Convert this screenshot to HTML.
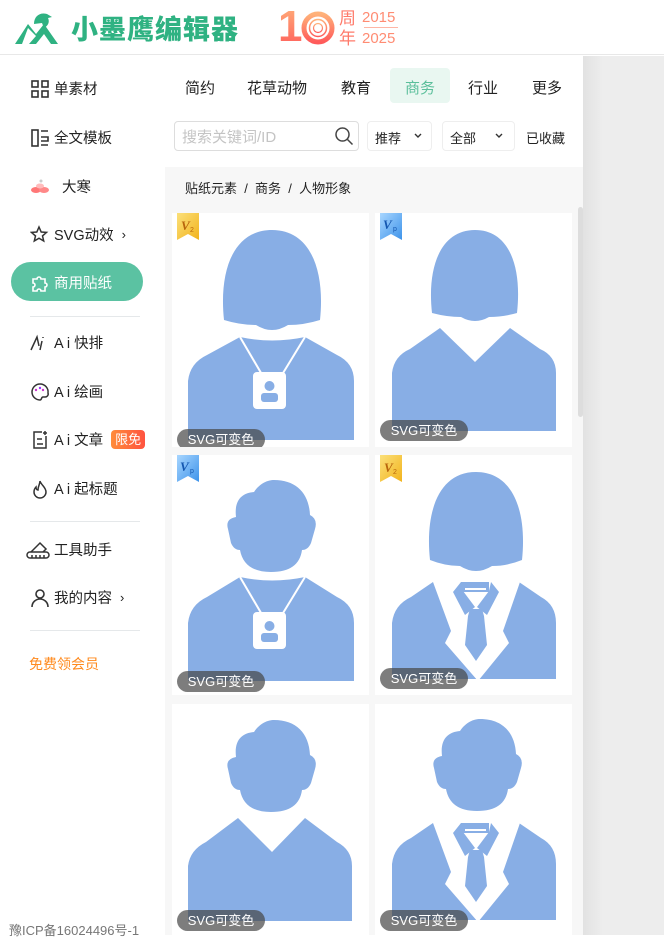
<!DOCTYPE html>
<html><head><meta charset="utf-8"><style>
*{margin:0;padding:0;box-sizing:border-box}
body{width:664px;height:935px;overflow:hidden;background:#fff;font-family:"Liberation Sans","Noto Sans CJK SC",sans-serif;position:relative;color:#222}
.a{position:absolute}
.hdr{left:0;top:0;width:664px;height:55px;background:#fff;border-bottom:1px solid #e8e8e8}
.side .it{position:absolute;left:30px;font-size:14.5px;color:#222;white-space:nowrap;display:flex;align-items:center;gap:4px}
.side .it svg{width:20px;height:20px}
.div{position:absolute;left:30px;width:110px;height:1px;background:#e5e8ea}
.tab{position:absolute;top:77px;font-size:15px;color:#222}
.card{position:absolute;background:#fff;overflow:hidden}
.card svg.f{position:absolute;left:0;top:0}
.lbl{position:absolute;left:5px;height:21px;width:88px;border-radius:11px;background:rgba(70,70,70,.7);color:#fff;font-size:13px;line-height:21px;text-align:center}
.rib{position:absolute;left:5px;top:0}
</style></head><body>
<div class="a hdr"></div>
<svg class="a" style="left:14px;top:10px" width="50" height="36" viewBox="0 0 50 36">
<path d="M20,14 C20,6 26,2 33,4 L38,7 L34,8 C36,12 34,16 30,18 L28,13 Z" fill="#2fb282"/>
<path d="M1,34 L14,14 L22,24 L30,14 L44,34 L37,34 L30,24 L22,34 L15,34 L22,26 L14,18 L8,34 Z" fill="#2fb282"/>
</svg>
<div class="a" style="left:71px;top:10px;font-size:27px;font-weight:900;color:#2fb282;letter-spacing:1px;font-family:'Noto Sans CJK SC',sans-serif;line-height:36px">小墨鹰编辑器</div>
<div class="a" style="left:278px;top:3px;font-size:44px;font-weight:bold;line-height:48px;background:linear-gradient(180deg,#ffb27a,#ff5a5a);-webkit-background-clip:text;color:transparent;font-family:'Liberation Sans',sans-serif">1</div>
<svg class="a" style="left:301px;top:9px" width="34" height="38" viewBox="0 0 34 38"><defs><linearGradient id="hg" x1="0" y1="0" x2="0" y2="1"><stop offset="0" stop-color="#ffb27a"/><stop offset="1" stop-color="#ff5a5a"/></linearGradient></defs><g fill="none" stroke="url(#hg)"><circle cx="17" cy="19" r="14" stroke-width="5"/><circle cx="17" cy="19" r="8.5" stroke-width="1.5"/><circle cx="17" cy="19" r="4.5" stroke-width="1.2"/></g></svg>
<div class="a" style="left:339px;top:7px;font-size:17px;line-height:20px;color:#ff7b6b;font-family:'Noto Sans CJK SC',sans-serif">周<br>年</div>
<div class="a" style="left:362px;top:7px;font-size:15px;line-height:21px;color:#ff8c73">2015<br>2025</div>
<div class="a" style="left:364px;top:27px;width:34px;height:1px;background:#ffb6a5"></div>

<div class="side">
<div class="it" style="top:78px"><svg viewBox="0 0 20 20" fill="none" stroke="#333" stroke-width="1.6"><rect x="2" y="2" width="6" height="6"/><rect x="12" y="2" width="6" height="6"/><rect x="2" y="12" width="6" height="6"/><rect x="12" y="12" width="6" height="6"/></svg>单素材</div>
<div class="it" style="top:127px"><svg viewBox="0 0 20 20" fill="none" stroke="#333" stroke-width="1.6"><rect x="2" y="2" width="6" height="16"/><path d="M11 3h7M11 9h7v4h-7M11 17h7"/></svg>全文模板</div>
<div class="it" style="top:176px"><svg viewBox="0 0 20 20"><ellipse cx="6" cy="13" rx="5" ry="3" fill="#f77"/><ellipse cx="14" cy="13" rx="5" ry="3" fill="#f88"/><ellipse cx="10" cy="9" rx="4" ry="2.5" fill="#fbb"/><circle cx="11" cy="4" r="1.5" fill="#ccc"/></svg>&nbsp;&nbsp;大寒</div>
<div class="it" style="top:224px"><svg viewBox="0 0 20 20" fill="none" stroke="#333" stroke-width="1.5"><path d="M9 2l2.2 5 5.3.4-4 3.5 1.2 5.1L9 13.2 4.3 16l1.2-5.1-4-3.5 5.3-.4z"/></svg>SVG动效 <span style="font-size:13px;margin-left:4px">›</span></div>
<div class="a" style="left:11px;top:262px;width:132px;height:39px;border-radius:20px;background:#5bc2a2"></div>
<div class="it" style="top:272px;color:#fff"><svg viewBox="0 0 20 20" fill="none" stroke="#fff" stroke-width="1.6"><path d="M3 6h4a2 2 0 1 1 4 0h4v4a2 2 0 1 1 0 4v4h-4a2 2 0 1 0-4 0H3v-4a2 2 0 1 0 0-4z"/></svg>商用贴纸</div>
<div class="div" style="top:316px"></div>
<div class="it" style="top:332px"><svg viewBox="0 0 20 20" fill="none" stroke="#333" stroke-width="1.5"><path d="M1 17L7 4l2 9M12 8l-2 9M13 4v1"/></svg>A i 快排</div>
<div class="it" style="top:381px"><svg viewBox="0 0 20 20" fill="none" stroke="#333" stroke-width="1.5"><path d="M10 2a8 8 0 1 0 0 16c2 0 1-3 3-3h2a3 3 0 0 0 3-4 8 8 0 0 0-8-9z"/><circle cx="6" cy="8" r="1.2" fill="#c3c" stroke="none"/><circle cx="10" cy="6" r="1.2" fill="#93f" stroke="none"/><circle cx="13" cy="8" r="1.2" fill="#c3c" stroke="none"/></svg>A i 绘画</div>
<div class="it" style="top:429px"><svg viewBox="0 0 20 20" fill="none" stroke="#333" stroke-width="1.5"><path d="M12 2H4v16h12V6M7 9h5M7 14h6M15 1v4M13 3h4"/></svg>A i 文章<span style="margin-left:4px;background:linear-gradient(90deg,#ff8c3a,#ff5340);color:#fff;font-size:13px;padding:0 4px;border-radius:4px;line-height:19px">限免</span></div>
<div class="it" style="top:478px"><svg viewBox="0 0 20 20" fill="none" stroke="#333" stroke-width="1.5"><path d="M10 2c1 4 6 6 6 11a6 6 0 0 1-12 0c0-3 2-5 2-5 0 2 1 3 2 3 0-4 2-6 2-9z"/></svg>A i 起标题</div>
<div class="div" style="top:521px"></div>
<div class="it" style="top:539px;left:26px"><svg viewBox="0 0 24 20" style="width:24px" fill="none" stroke="#333" stroke-width="1.5"><rect x="1" y="12" width="22" height="6" rx="3"/><path d="M5 12l9-9 6 6-3 3M6 15v3M10 15v3M14 15v3M18 15v3"/></svg>工具助手</div>
<div class="it" style="top:587px"><svg viewBox="0 0 20 20" fill="none" stroke="#333" stroke-width="1.6"><circle cx="10" cy="6" r="4"/><path d="M2 19c0-5 4-8 8-8s8 3 8 8"/></svg>我的内容 <span style="font-size:13px;margin-left:4px">›</span></div>
<div class="div" style="top:630px"></div>
<div class="a" style="left:29px;top:654px;font-size:14px;color:#ff8a1e">免费领会员</div>
<div class="a" style="left:9px;top:920px;font-size:13px;color:#777">豫ICP备16024496号-1</div>
</div>

<div class="a" style="left:583px;top:56px;width:81px;height:879px;background:linear-gradient(90deg,#e2e2e2,#ededed 20px)"></div>

<div class="a" style="left:390px;top:68px;width:60px;height:35px;border-radius:4px;background:#e9f7f1"></div>
<div class="tab" style="left:185px">简约</div>
<div class="tab" style="left:247px">花草动物</div>
<div class="tab" style="left:341px">教育</div>
<div class="tab" style="left:405px;color:#5bbf9b">商务</div>
<div class="tab" style="left:468px">行业</div>
<div class="tab" style="left:532px">更多</div>

<div class="a" style="left:174px;top:121px;width:185px;height:30px;border:1px solid #ddd;border-radius:4px"></div>
<div class="a" style="left:182px;top:126px;font-size:15px;color:#c4c4c4">搜索关键词/ID</div>
<svg class="a" style="left:334px;top:126px" width="20" height="20" viewBox="0 0 20 20" fill="none" stroke="#444" stroke-width="1.5"><circle cx="8.5" cy="8.5" r="6.5"/><path d="M13.5 13.5l5 5"/></svg>
<div class="a" style="left:367px;top:121px;width:65px;height:30px;border:1px solid #eee;border-radius:4px"></div>
<div class="a" style="left:375px;top:128px;font-size:13px">推荐</div>
<svg class="a" style="left:414px;top:133px" width="8" height="6" viewBox="0 0 8 6" fill="none" stroke="#333" stroke-width="1.4"><path d="M1 1l3 3 3-3"/></svg>
<div class="a" style="left:442px;top:121px;width:73px;height:30px;border:1px solid #eee;border-radius:4px"></div>
<div class="a" style="left:450px;top:128px;font-size:13px">全部</div>
<svg class="a" style="left:495px;top:133px" width="8" height="6" viewBox="0 0 8 6" fill="none" stroke="#333" stroke-width="1.4"><path d="M1 1l3 3 3-3"/></svg>
<div class="a" style="left:526px;top:128px;font-size:13px">已收藏</div>

<div class="a" style="left:165px;top:167px;width:418px;height:768px;background:#f7f7f7"></div>
<div class="a" style="left:185px;top:178px;font-size:13px">贴纸元素 &nbsp;/ &nbsp;商务 &nbsp;/ &nbsp;人物形象</div>
<div class="a" style="left:578px;top:207px;width:5px;height:210px;border-radius:3px;background:#ddd"></div>

<div class="card" style="left:172px;top:213px;width:197px;height:234px">
<svg class="f" width="197" height="234" viewBox="0 0 197 234" fill="#88aee5">
<path d="M52,107 C47,60 60,17 100,17 C140,17 153,60 148,107 Q132,112 116,112 Q100,122 84,112 Q68,112 52,107Z"/>
<path d="M16,227 L16,168 Q18,150 35,142 L68,124 Q100,131 133,124 L165,142 Q182,150 182,168 L182,227Z"/>
<path d="M68,124 L92,165 M133,124 L108,165" stroke="#fff" stroke-width="2"/>
<rect x="81" y="159" width="33" height="37" rx="4" fill="#fff"/>
<circle cx="97.5" cy="173" r="5"/><rect x="89" y="180" width="17" height="9" rx="3"/>
</svg>
<svg class="rib" width="22" height="27" viewBox="0 0 22 27"><defs><linearGradient id="g1" x1="0" y1="0" x2="1" y2="1"><stop offset="0" stop-color="#fbe07a"/><stop offset="1" stop-color="#f2b31d"/></linearGradient></defs><path d="M0,0H22V27L11,21L0,27Z" fill="url(#g1)"/><text x="4" y="17" font-size="13" font-style="italic" font-weight="bold" fill="#b8650c" font-family="Liberation Serif,serif">V</text><text x="13" y="19" font-size="7" fill="#b8650c" font-family="Liberation Sans,sans-serif">2</text></svg>
<div class="lbl" style="top:216px">SVG可变色</div>
</div>

<div class="card" style="left:375px;top:213px;width:197px;height:234px">
<svg class="f" width="197" height="234" viewBox="0 0 197 234" fill="#88aee5">
<path d="M57,100 C52,55 65,17 100,17 C135,17 147,55 142,100 Q128,104 114,104 Q100,112 86,104 Q72,104 57,100Z"/>
<path d="M17,218 L17,160 Q19,143 35,136 L65,115 L100,149 L135,115 L165,136 Q181,143 181,160 L181,218Z"/>
</svg>
<svg class="rib" width="22" height="27" viewBox="0 0 22 27"><defs><linearGradient id="g2" x1="0" y1="0" x2="1" y2="1"><stop offset="0" stop-color="#a8d6ff"/><stop offset="1" stop-color="#3e93ea"/></linearGradient></defs><path d="M0,0H22V27L11,21L0,27Z" fill="url(#g2)"/><text x="3" y="16" font-size="13" font-style="italic" font-weight="bold" fill="#1557b0" font-family="Liberation Serif,serif">V</text><text x="13" y="18" font-size="7" fill="#1557b0" font-family="Liberation Sans,sans-serif">p</text></svg>
<div class="lbl" style="top:207px">SVG可变色</div>
</div>

<div class="card" style="left:172px;top:455px;width:197px;height:240px">
<svg class="f" width="197" height="240" viewBox="0 0 197 240" fill="#88aee5">
<path d="M64,62 C62,45 70,38 82,37 C88,28 96,25 102,25 C124,25 137,38 138,60 Q146,64 143,74 L139,88 Q136,95 130,95 Q127,117 99,117 Q72,117 68,95 Q62,95 59,88 L56,74 Q53,64 64,62Z"/>
<path d="M16,226 L16,168 Q18,150 35,142 L68,122 Q100,129 133,122 L165,142 Q182,150 182,168 L182,226Z"/>
<path d="M68,122 L92,163 M133,122 L108,163" stroke="#fff" stroke-width="2"/>
<rect x="81" y="157" width="33" height="37" rx="4" fill="#fff"/>
<circle cx="97.5" cy="171" r="5"/><rect x="89" y="178" width="17" height="9" rx="3"/>
</svg>
<svg class="rib" width="22" height="27" viewBox="0 0 22 27"><path d="M0,0H22V27L11,21L0,27Z" fill="url(#g2)"/><text x="3" y="16" font-size="13" font-style="italic" font-weight="bold" fill="#1557b0" font-family="Liberation Serif,serif">V</text><text x="13" y="18" font-size="7" fill="#1557b0" font-family="Liberation Sans,sans-serif">p</text></svg>
<div class="lbl" style="top:216px">SVG可变色</div>
</div>

<div class="card" style="left:375px;top:455px;width:197px;height:240px">
<svg class="f" width="197" height="240" viewBox="0 0 197 240" fill="#88aee5">
<path d="M55,105 C50,58 63,17 101,17 C139,17 152,58 147,105 Q132,111 117,111 Q101,121 85,111 Q70,111 55,105Z"/>
<path d="M17,224 L17,168 Q19,150 36,142 L58,127 L144,127 L166,142 Q181,150 181,168 L181,224Z"/>
<path d="M58,127 L76,176 L70,188 L103,226 L134,188 L128,176 L145,127Z" fill="#fff"/>
<rect x="86" y="127" width="28" height="10"/><rect x="90" y="133" width="21" height="2" fill="#fff"/>
<path d="M78,137 L86,127 L88,136 L100,152 L90,160Z"/><path d="M124,137 L116,127 L114,136 L102,152 L112,160Z"/>
<path d="M95,154 L107,154 L109,161 L112,190 L101,206 L90,190 L93,161Z"/>
</svg>
<svg class="rib" width="22" height="27" viewBox="0 0 22 27"><path d="M0,0H22V27L11,21L0,27Z" fill="url(#g1)"/><text x="4" y="17" font-size="13" font-style="italic" font-weight="bold" fill="#b8650c" font-family="Liberation Serif,serif">V</text><text x="13" y="19" font-size="7" fill="#b8650c" font-family="Liberation Sans,sans-serif">2</text></svg>
<div class="lbl" style="top:213px">SVG可变色</div>
</div>

<div class="card" style="left:172px;top:704px;width:197px;height:231px">
<svg class="f" width="197" height="231" viewBox="0 0 197 231" fill="#88aee5">
<g transform="translate(0,-9)"><path d="M64,62 C62,45 70,38 82,37 C88,28 96,25 102,25 C124,25 137,38 138,60 Q146,64 143,74 L139,88 Q136,95 130,95 Q127,117 99,117 Q72,117 68,95 Q62,95 59,88 L56,74 Q53,64 64,62Z"/></g>
<path d="M16,217 L16,162 Q18,146 34,138 L66,114 L100,148 L133,114 L165,138 Q180,146 180,162 L180,217Z"/>
</svg>
<div class="lbl" style="top:206px">SVG可变色</div>
</div>

<div class="card" style="left:375px;top:704px;width:197px;height:231px">
<svg class="f" width="197" height="231" viewBox="0 0 197 231" fill="#88aee5">
<g transform="translate(3,-10)"><path d="M64,62 C62,45 70,38 82,37 C88,28 96,25 102,25 C124,25 137,38 138,60 Q146,64 143,74 L139,88 Q136,95 130,95 Q127,117 99,117 Q72,117 68,95 Q62,95 59,88 L56,74 Q53,64 64,62Z"/></g>
<g transform="translate(0,-8)">
<path d="M17,224 L17,168 Q19,150 36,142 L58,127 L144,127 L166,142 Q181,150 181,168 L181,224Z"/>
<path d="M58,127 L76,176 L70,188 L103,226 L134,188 L128,176 L145,127Z" fill="#fff"/>
<rect x="86" y="127" width="28" height="10"/><rect x="90" y="133" width="21" height="2" fill="#fff"/>
<path d="M78,137 L86,127 L88,136 L100,152 L90,160Z"/><path d="M124,137 L116,127 L114,136 L102,152 L112,160Z"/>
<path d="M95,154 L107,154 L109,161 L112,190 L101,206 L90,190 L93,161Z"/>
</g>
</svg>
<div class="lbl" style="top:206px">SVG可变色</div>
</div>
</body></html>
